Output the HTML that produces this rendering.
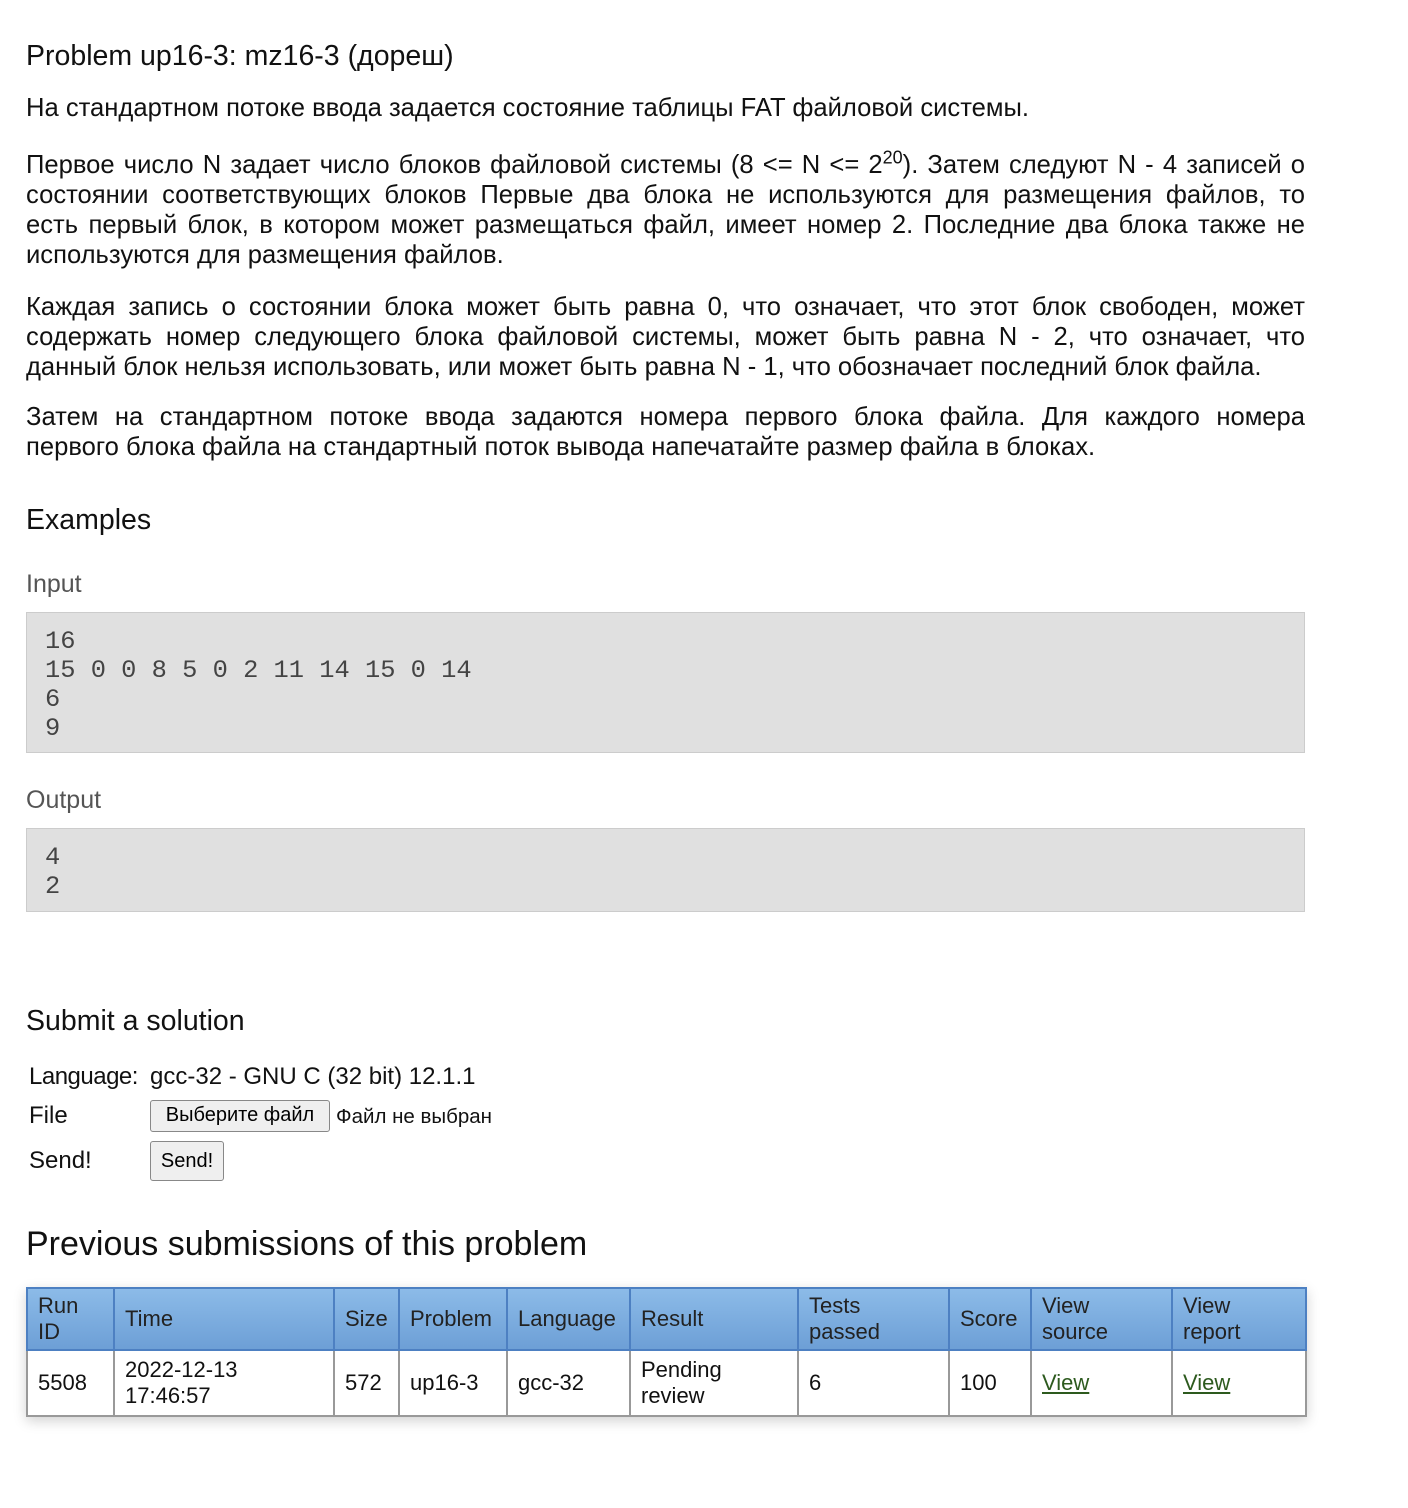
<!DOCTYPE html>
<html><head><meta charset="utf-8"><style>
body{margin:0;background:#fff;width:1408px;height:1508px;position:relative;overflow:hidden;font-family:"Liberation Sans","Noto Sans CJK SC",sans-serif;color:#111}
.a{position:absolute;left:26px;width:1279px}
.p{font-size:25.6px;line-height:30px}
.p div{text-align:justify;text-align-last:justify;white-space:nowrap}
.p div.l{text-align-last:left}
h1,h2,h3{margin:0;font-weight:normal;position:absolute;left:26px;white-space:nowrap}
.h{font-size:28.5px;line-height:36px}
.sub{font-size:25px;color:#555;line-height:30px}
.box{position:absolute;left:26px;width:1277px;background:#e0e0e0;border:1px solid #ccc;font-family:"Liberation Mono",monospace;font-size:25.4px;line-height:29px;color:#444;box-sizing:content-box}
.box pre{margin:0;padding:14px 0 0 18px;font:inherit}
.f{position:absolute;font-size:24px;line-height:30px}
.btn{position:absolute;background:#efefef;border:1px solid #888;border-radius:3px;font-size:20px;line-height:28px;text-align:center;color:#000}
table{position:absolute;left:26px;top:1287px;width:1279px;table-layout:fixed;border-collapse:collapse;box-shadow:0 4px 12px rgba(0,0,0,.18);font-size:22px}
th{background:linear-gradient(#8cbbe8,#6d9fd6);border:2px solid #4d80c2;font-weight:normal;text-align:left;padding:0 10px;height:60px;line-height:26px;color:#222}
td{border:2px solid #999;padding:0 10px;height:64px;line-height:26px;background:#fff}
a{color:#2d5a1e;text-decoration:underline}
</style></head><body>
<h1 class="h" style="top:38px">Problem up16-3: mz16-3 (дореш)</h1>
<div class="a p" style="top:93px"><div class="l">На стандартном потоке ввода задается состояние таблицы FAT файловой системы.</div></div>
<div class="a p" style="top:150px">
<div>Первое число N задает число блоков файловой системы (8 &lt;= N &lt;= 2<sup style="font-size:18px;line-height:0">20</sup>). Затем следуют N - 4 записей о</div>
<div>состоянии соответствующих блоков Первые два блока не используются для размещения файлов, то</div>
<div>есть первый блок, в котором может размещаться файл, имеет номер 2. Последние два блока также не</div>
<div class="l">используются для размещения файлов.</div></div>
<div class="a p" style="top:292px">
<div>Каждая запись о состоянии блока может быть равна 0, что означает, что этот блок свободен, может</div>
<div>содержать номер следующего блока файловой системы, может быть равна N - 2, что означает, что</div>
<div class="l">данный блок нельзя использовать, или может быть равна N - 1, что обозначает последний блок файла.</div></div>
<div class="a p" style="top:402px">
<div>Затем на стандартном потоке ввода задаются номера первого блока файла. Для каждого номера</div>
<div class="l">первого блока файла на стандартный поток вывода напечатайте размер файла в блоках.</div></div>
<h2 class="h" style="top:502px">Examples</h2>
<h3 class="sub" style="top:569px">Input</h3>
<div class="box" style="top:612px;height:139px"><pre>16
15 0 0 8 5 0 2 11 14 15 0 14
6
9</pre></div>
<h3 class="sub" style="top:785px">Output</h3>
<div class="box" style="top:828px;height:82px"><pre>4
2</pre></div>
<h2 class="h" style="top:1003px">Submit a solution</h2>
<div class="f" style="left:29px;top:1062px;letter-spacing:-0.5px">Language:</div>
<div class="f" style="left:150px;top:1062px">gcc-32 - GNU C (32 bit) 12.1.1</div>
<div class="f" style="left:29px;top:1101px">File</div>
<div class="btn" style="left:150px;top:1100px;width:178px;height:30px">Выберите файл</div>
<div class="f" style="left:336px;top:1102px;font-size:20.5px">Файл не выбран</div>
<div class="f" style="left:29px;top:1146px">Send!</div>
<div class="btn" style="left:150px;top:1141px;width:72px;height:38px;line-height:38px">Send!</div>
<h2 class="h" style="top:1224px;font-size:34px;line-height:40px">Previous submissions of this problem</h2>
<table>
<colgroup><col style="width:87px"><col style="width:220px"><col style="width:65px"><col style="width:108px"><col style="width:123px"><col style="width:168px"><col style="width:151px"><col style="width:82px"><col style="width:141px"><col style="width:134px"></colgroup>
<tr><th>Run<br>ID</th><th>Time</th><th>Size</th><th>Problem</th><th>Language</th><th>Result</th><th>Tests<br>passed</th><th>Score</th><th>View<br>source</th><th>View<br>report</th></tr>
<tr><td>5508</td><td>2022-12-13<br>17:46:57</td><td>572</td><td>up16-3</td><td>gcc-32</td><td>Pending<br>review</td><td>6</td><td>100</td><td><a>View</a></td><td><a>View</a></td></tr>
</table>
</body></html>
